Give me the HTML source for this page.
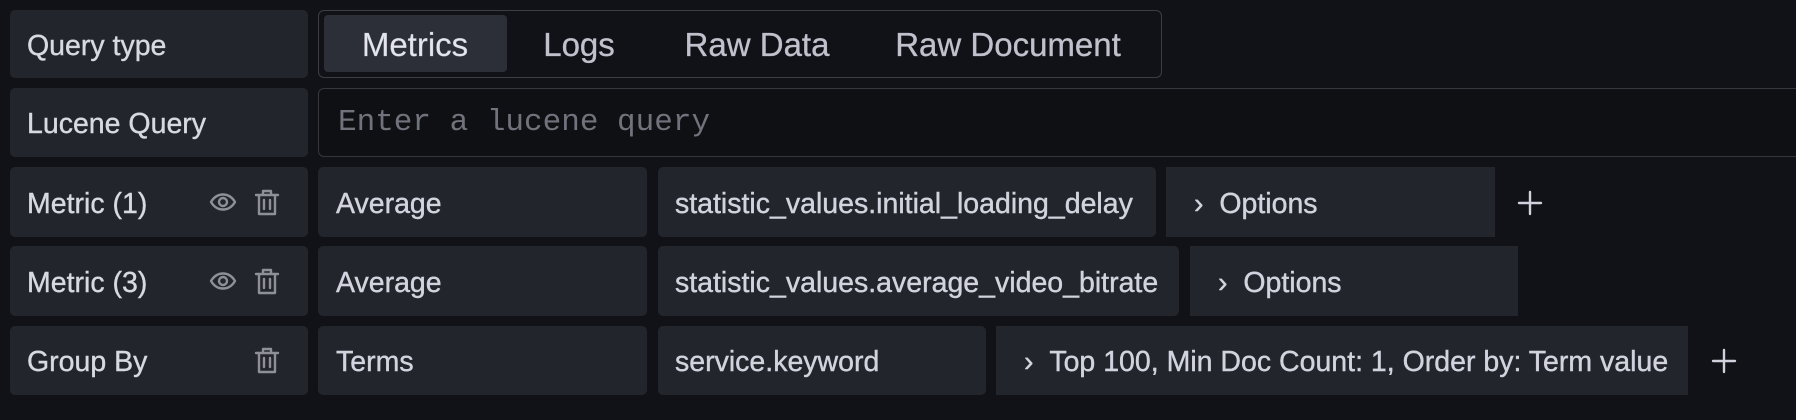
<!DOCTYPE html>
<html><head><meta charset="utf-8"><style>
body{margin:0;width:1796px;height:420px;background:#111217;position:relative;overflow:hidden;font-family:"Liberation Sans",sans-serif;color:#ccccdc}
.b{position:absolute;background:#22252b;border-radius:5px;box-sizing:border-box;display:flex;align-items:center;white-space:nowrap;font-size:28.5px;padding-top:4px;color:#d2d3de;-webkit-text-stroke:0.4px #d2d3de}
.lab{left:10px;width:298px;padding-left:17px;font-size:28.5px;color:#d8d9e3}
.t{position:absolute;font-size:33px;white-space:nowrap;color:#c0c1cc;transform:translateX(-50%);-webkit-text-stroke:0.3px #c0c1cc}
.ic{position:absolute}
</style></head><body>
<div class="b lab" style="top:10px;height:68px">Query type</div>
<div style="position:absolute;left:318px;top:10px;width:844px;height:68px;border:1.5px solid #3b3e45;border-radius:6px;box-sizing:border-box"></div>
<div style="position:absolute;left:324px;top:15px;width:183px;height:57px;background:#2c2f37;border-radius:4px"></div>
<div class="t" style="left:415px;top:26px;color:#e4e5ee">Metrics</div>
<div class="t" style="left:579px;top:26px">Logs</div>
<div class="t" style="left:757px;top:26px">Raw Data</div>
<div class="t" style="left:1008px;top:26px">Raw Document</div>

<div class="b lab" style="top:88px;height:69px">Lucene Query</div>
<div style="position:absolute;left:318px;top:88px;width:1500px;height:69px;background:#0f1014;border:1.5px solid #34373e;border-radius:6px;box-sizing:border-box"></div>
<div style="position:absolute;left:338px;top:105px;font-family:'Liberation Mono',monospace;font-size:31px;color:#70737c;white-space:nowrap">Enter a lucene query</div>

<div class="b lab" style="top:167px;height:70px">Metric (1)</div>
<div class="b" style="left:318px;top:167px;width:329px;height:70px;padding-left:18px">Average</div>
<div class="b" style="left:658px;top:167px;width:498px;height:70px;padding-left:17px">statistic_values.initial_loading_delay</div>
<div class="b" style="left:1166px;top:167px;width:329px;height:70px;border-radius:0;padding-left:28px">›&nbsp;&nbsp;Options</div>

<div class="b lab" style="top:246px;height:70px">Metric (3)</div>
<div class="b" style="left:318px;top:246px;width:329px;height:70px;padding-left:18px">Average</div>
<div class="b" style="left:658px;top:246px;width:521px;height:70px;padding-left:17px">statistic_values.average_video_bitrate</div>
<div class="b" style="left:1190px;top:246px;width:328px;height:70px;border-radius:0;padding-left:28px">›&nbsp;&nbsp;Options</div>

<div class="b lab" style="top:326px;height:69px">Group By</div>
<div class="b" style="left:318px;top:326px;width:329px;height:69px;padding-left:18px">Terms</div>
<div class="b" style="left:658px;top:326px;width:328px;height:69px;padding-left:17px">service.keyword</div>
<div class="b" style="left:996px;top:326px;width:692px;height:69px;border-radius:0;padding-left:28px">›&nbsp;&nbsp;Top 100, Min Doc Count: 1, Order by: Term value</div>

<svg class="ic" width="1796" height="420" style="left:0;top:0" fill="none" stroke="#8e8f99" stroke-width="2.4" stroke-linecap="round" stroke-linejoin="round">
<defs>
<g id="eye"><path d="M-12 0 C-6 -10 6 -10 12 0 C6 10 -6 10 -12 0Z"/><circle r="4"/></g>
<g id="tr"><path d="M-11 -7 H11 M-4 -7 V-11 H4 V-7 M-8 -7 V12 H8 V-7 M-3 -2 V7 M3 -2 V7"/></g>
<g id="pl"><path d="M-11 0 H11 M0 -11 V11" stroke="#d0d1dc" stroke-width="2.4"/></g>
</defs>
<use href="#eye" x="223" y="202"/><use href="#tr" x="267" y="202"/>
<use href="#eye" x="223" y="281"/><use href="#tr" x="267" y="281"/>
<use href="#tr" x="267" y="360"/>
<use href="#pl" x="1530" y="203"/>
<use href="#pl" x="1724" y="361"/>
</svg>
</body></html>
